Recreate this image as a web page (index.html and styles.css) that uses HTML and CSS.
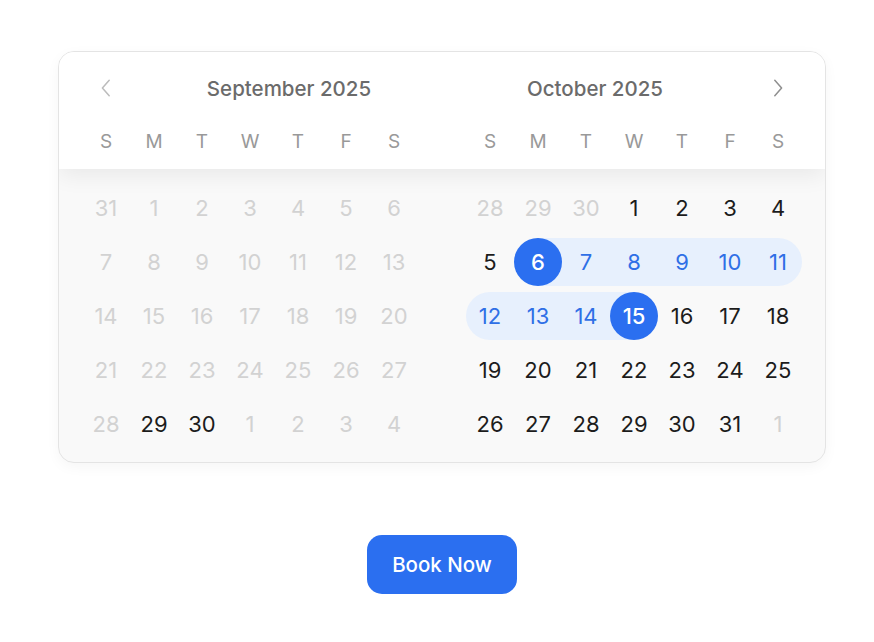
FILE: index.html
```html
<!DOCTYPE html>
<html lang="en">
<head>
<meta charset="utf-8">
<title>Date range picker</title>
<link rel="stylesheet" href="styles.css">
</head>
<body>
<main class="page">
  <section class="picker">
    <header class="picker-head">
      <div class="month-head">
        <div class="title-row">
          <button class="nav nav-prev" aria-label="Previous month">
            <svg width="10" height="18" viewBox="0 0 10 18"><path d="M8.2 1.2 1.4 9l6.8 7.8" fill="none" stroke="currentColor" stroke-width="1.5" stroke-linecap="round" stroke-linejoin="round"/></svg>
          </button>
          <h2 class="title">September 2025</h2>
        </div>
        <div class="weekdays"><span>S</span><span>M</span><span>T</span><span>W</span><span>T</span><span>F</span><span>S</span></div>
      </div>
      <div class="month-head">
        <div class="title-row">
          <h2 class="title">October 2025</h2>
          <button class="nav nav-next" aria-label="Next month">
            <svg width="10" height="18" viewBox="0 0 10 18"><path d="M1.8 1.2 8.6 9l-6.8 7.8" fill="none" stroke="currentColor" stroke-width="1.5" stroke-linecap="round" stroke-linejoin="round"/></svg>
          </button>
        </div>
        <div class="weekdays"><span>S</span><span>M</span><span>T</span><span>W</span><span>T</span><span>F</span><span>S</span></div>
      </div>
    </header>
    <div class="picker-body">
      <div class="days">
        <span class="day out">31</span><span class="day out">1</span><span class="day out">2</span><span class="day out">3</span><span class="day out">4</span><span class="day out">5</span><span class="day out">6</span>
        <span class="day out">7</span><span class="day out">8</span><span class="day out">9</span><span class="day out">10</span><span class="day out">11</span><span class="day out">12</span><span class="day out">13</span>
        <span class="day out">14</span><span class="day out">15</span><span class="day out">16</span><span class="day out">17</span><span class="day out">18</span><span class="day out">19</span><span class="day out">20</span>
        <span class="day out">21</span><span class="day out">22</span><span class="day out">23</span><span class="day out">24</span><span class="day out">25</span><span class="day out">26</span><span class="day out">27</span>
        <span class="day out">28</span><span class="day">29</span><span class="day">30</span><span class="day out">1</span><span class="day out">2</span><span class="day out">3</span><span class="day out">4</span>
      </div>
      <div class="days">
        <span class="day out">28</span><span class="day out">29</span><span class="day out">30</span><span class="day">1</span><span class="day">2</span><span class="day">3</span><span class="day">4</span>
        <span class="day">5</span><span class="day sel start"><b>6</b></span><span class="day range">7</span><span class="day range">8</span><span class="day range">9</span><span class="day range">10</span><span class="day range row-end">11</span>
        <span class="day range row-start">12</span><span class="day range">13</span><span class="day range">14</span><span class="day sel end"><b>15</b></span><span class="day">16</span><span class="day">17</span><span class="day">18</span>
        <span class="day">19</span><span class="day">20</span><span class="day">21</span><span class="day">22</span><span class="day">23</span><span class="day">24</span><span class="day">25</span>
        <span class="day">26</span><span class="day">27</span><span class="day">28</span><span class="day">29</span><span class="day">30</span><span class="day">31</span><span class="day out">1</span>
      </div>
    </div>
  </section>
  <button class="book">Book Now</button>
</main>
</body>
</html>
```
FILE: styles.css
```css
* { box-sizing: border-box; }
html, body { margin: 0; background: #ffffff; }
body { font-family: Inter, "Noto Sans", "Liberation Sans", sans-serif; }

.page {
  display: flex;
  flex-direction: column;
  align-items: center;
  padding: 51px 0 0 10px;
  width: 874px;
}

.picker {
  width: 768px;
  border: 1px solid #e4e4e4;
  border-radius: 16px;
  background: #f9f9f9;
  overflow: hidden;
  box-shadow: 0 4px 14px rgba(0, 0, 0, 0.04);
}

.picker-head {
  position: relative;
  z-index: 1;
  display: grid;
  grid-template-columns: 336px 336px;
  column-gap: 48px;
  padding: 19px 23px 12px;
  background: #ffffff;
  box-shadow: 0 6px 22px rgba(0, 0, 0, 0.07);
}

.title-row {
  height: 34px;
  display: flex;
  align-items: center;
}

.title {
  flex: 1;
  margin: 0;
  text-align: center;
  font-size: 20.5px;
  font-weight: 500;
  color: #6b6b6b;
}

.nav {
  width: 78px;
  height: 34px;
  padding: 0;
  border: 0;
  background: none;
  display: flex;
  align-items: center;
}
.nav svg { display: block; }
.nav-prev { justify-content: flex-start; padding-left: 19px; color: #bcbcbc; }
.nav-next { justify-content: flex-end; padding-right: 19px; color: #8f8f8f; }

.weekdays {
  margin-top: 20px;
  display: grid;
  grid-template-columns: repeat(7, 48px);
  height: 32px;
  align-items: center;
}
.weekdays span {
  text-align: center;
  font-size: 19px;
  font-weight: 400;
  color: #999999;
}

.picker-body {
  display: grid;
  grid-template-columns: 336px 336px;
  column-gap: 48px;
  padding: 15px 23px 14px;
}

.days {
  display: grid;
  grid-template-columns: repeat(7, 48px);
  grid-auto-rows: 48px;
  row-gap: 6px;
}

.day {
  display: flex;
  align-items: center;
  justify-content: center;
  font-size: 22px;
  color: #1c1c1c;
}
.day.out { color: #d2d2d2; }

.day.range {
  background: #e7f0fd;
  color: #2f6fe6;
}
.day.row-end { border-radius: 0 24px 24px 0; }
.day.row-start { border-radius: 24px 0 0 24px; }

.day.sel b {
  width: 48px;
  height: 48px;
  border-radius: 50%;
  background: #2b6ff0;
  color: #ffffff;
  font-weight: 500;
  display: flex;
  align-items: center;
  justify-content: center;
}
.day.start { background: linear-gradient(to right, transparent 50%, #e7f0fd 50%); }
.day.end { background: linear-gradient(to right, #e7f0fd 50%, transparent 50%); }

.book {
  margin-top: 72px;
  width: 150px;
  height: 59px;
  border: 0;
  border-radius: 15px;
  background: #2b6ff0;
  color: #ffffff;
  font-family: Inter, "Noto Sans", "Liberation Sans", sans-serif;
  font-size: 20.5px;
  font-weight: 500;
}
```
